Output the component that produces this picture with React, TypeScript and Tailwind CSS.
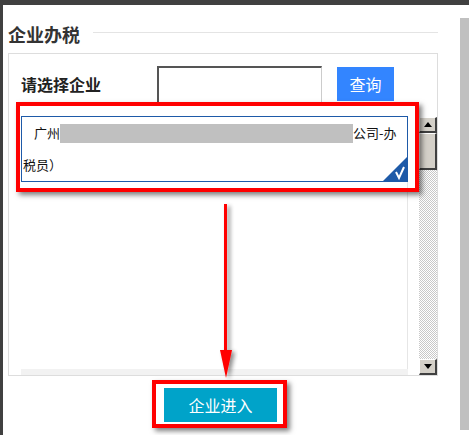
import React from 'react';

function ScrollButton({ dir }: { dir: 'up' | 'down' }) {
  return (
    <div className="h-[16px] bg-[#d4d0c8] border-t border-l border-t-white border-l-white border-r-2 border-b-2 border-r-[#404040] border-b-[#404040] flex items-center justify-center">
      <svg width="8" height="5" viewBox="0 0 8 5">
        {dir === 'up' ? (
          <polygon points="0,5 8,5 4,0" fill="#000" />
        ) : (
          <polygon points="0,0 8,0 4,5" fill="#000" />
        )}
      </svg>
    </div>
  );
}

function VScrollbar() {
  return (
    <div className="w-[18px] flex flex-col mt-px">
      <ScrollButton dir="up" />
      <div className="h-[37px] bg-[#d4d0c8] border-t border-l border-t-white border-l-white border-r-2 border-b-2 border-r-[#404040] border-b-[#404040]" />
      <div className="flex-1 bg-[repeating-conic-gradient(#c8c8c8_0_25%,#ffffff_0_50%)] bg-[length:2px_2px]" />
      <ScrollButton dir="down" />
    </div>
  );
}

export default function App() {
  return (
    <div className="w-[469px] h-[435px] bg-white relative overflow-hidden font-['Noto_Sans_CJK_SC','Liberation_Sans',sans-serif]">
      <div className="h-[5px] bg-[#404040]" />
      <div className="flex h-[430px]">
        <div className="w-[3px] bg-[#404040]" />

        <div className="flex-1 pl-[5px]">
          {/* title */}
          <div className="flex items-start mt-[17px] mr-[22px]">
            <h1 className="text-[18px] leading-[24px] font-bold text-[#333]">企业办税</h1>
            <div className="flex-1 h-px bg-[#e4e4e4] mt-[10px] ml-[13px]" />
          </div>

          {/* panel */}
          <div className="mt-[7px] w-[430px] h-[323px] border border-[#dddddd] flex flex-col pl-[12px]">
            <div className="flex items-start h-[62px] pt-[12px]">
              <div className="w-[136px] mt-[8px] text-[16px] leading-[20px] font-bold text-[#222]">请选择企业</div>
              <div className="w-[165px] h-[36px] border-t-2 border-l-2 border-t-[#555] border-l-[#555] border-r border-r-[#ccc] bg-white" />
              <button className="ml-[15px] mt-px w-[57px] h-[34px] bg-[#3385ff] text-white text-[16px] leading-[34px]">
                查询
              </button>
            </div>

            <div className="flex flex-1">
              <div className="w-[387px] flex flex-col">
                <div className="relative h-[66px] border border-[#1e5aa8] text-[13px] leading-[32px] text-[#111] pl-px">
                  <div className="pl-[11px]">
                    广州
                    <span className="inline-block align-middle w-[293px] h-[19px] bg-[#c0c0c0] -mt-[2px]" />
                    公司-办
                  </div>
                  <div>税员）</div>
                  <svg className="absolute right-0 bottom-0" width="24" height="24" viewBox="0 0 24 24">
                    <polygon points="24,0 24,24 0,24" fill="#1e5aa8" />
                    <path d="M13 15 L16 21 L21 10" stroke="#fff" strokeWidth="2" fill="none" />
                  </svg>
                </div>
                <div className="flex-1 border-r border-[#e6e6e6]" />
                <div className="h-[6px] bg-[#f2f2f2]" />
              </div>
              <div className="ml-[11px]">
                <div className="h-full flex">
                  <VScrollbar />
                </div>
              </div>
            </div>
          </div>

          {/* enter button */}
          <button className="mt-[12px] ml-[156px] w-[113px] h-[34px] bg-[#00a3c9] text-white text-[16px] leading-[34px]">
            企业进入
          </button>
        </div>

        <div className="w-[9px] flex flex-col">
          <div className="mt-[13px] h-[412px] bg-[#c0c0c0]" />
        </div>
      </div>

      {/* annotations */}
      <div className="absolute left-[16px] top-[102px] w-[403px] h-[90px] border-4 border-[#ff0000] shadow-[3px_3px_5px_rgba(0,0,0,0.5)]" />
      <svg className="absolute left-[212px] top-[200px]" width="30" height="186" viewBox="0 0 30 186">
        <defs>
          <filter id="sh" x="-50%" y="-10%" width="200%" height="120%">
            <feDropShadow dx="3" dy="2" stdDeviation="2" floodColor="#000" floodOpacity="0.45" />
          </filter>
        </defs>
        <g filter="url(#sh)">
          <rect x="12" y="4" width="3" height="150" fill="#ff0000" />
          <polygon points="8,150 20,150 14,178" fill="#ff0000" />
        </g>
      </svg>
      <div className="absolute left-[152px] top-[380px] w-[135px] h-[48px] border-4 border-[#ff0000] shadow-[3px_3px_5px_rgba(0,0,0,0.5)]" />
    </div>
  );
}
